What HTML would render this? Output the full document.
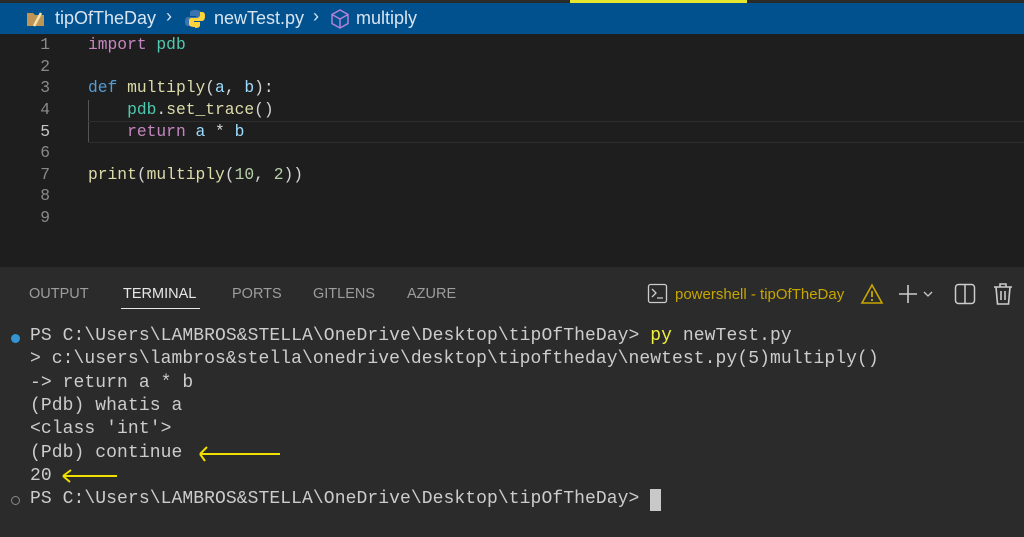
<!DOCTYPE html>
<html><head><meta charset="utf-8"><style>
*{margin:0;padding:0;box-sizing:border-box}
body{width:1024px;height:537px;overflow:hidden;background:#2b2b2b;position:relative;font-family:"Liberation Sans",sans-serif}
.top{position:absolute;left:0;top:0;width:1024px;height:3px;background:#2b2b2b}
.top i{position:absolute;left:570px;top:0;width:177px;height:3px;background:#e6e62e}
.bc{position:absolute;left:0;top:3px;width:1024px;height:31px;background:#02518f;color:#d8e4f0;font-size:18px}
.bc span{position:absolute;top:5px}
.ed{position:absolute;left:0;top:34px;width:1024px;height:233px;background:#1e1e1e}
.ln{position:absolute;left:0;width:50px;text-align:right;color:#8a8a8a;font:16.3px "Liberation Mono",monospace}
.cd{position:absolute;left:88px;white-space:pre;color:#d4d4d4;font:16.3px "Liberation Mono",monospace}
.k{color:#c586c0}.m{color:#4ec9b0}.d{color:#569cd6}.f{color:#dcdcaa}.v{color:#9cdcfe}.n{color:#b5cea8}
.tabs span{position:absolute;top:286px;font-size:14.5px;color:#9d9d9d}
.term{position:absolute;left:30px;white-space:pre;color:#cccccc;font:18px "Liberation Mono",monospace;letter-spacing:0.08px}
</style></head><body>
<div class="top"><i></i></div>
<div class="bc">
<svg style="position:absolute;left:26px;top:7px" width="20" height="18"><path d="M1 3h6l2 2h9v11H1z" fill="#c09553"/><path d="M8 16l7-13" stroke="#f3e3b0" stroke-width="2.5"/></svg>
<span style="left:55px">tipOfTheDay</span>
<span style="left:166px;top:3px">›</span>
<svg style="position:absolute;left:185px;top:6px" width="20" height="20"><path d="M10 1c-5 0-5 2-5 3v3h6v1H3c-2 0-3 2-3 5s1 4 3 4h2v-3c0-2 2-3 4-3h5c1 0 2-1 2-3V4c0-2-2-3-6-3z" fill="#3a75b0"/><path d="M10 19c5 0 5-2 5-3v-3H9v-1h8c2 0 3-2 3-5s-1-4-3-4h-2v3c0 2-2 3-4 3H6c-1 0-2 1-2 3v3c0 2 2 3 6 3z" fill="#ffd43b"/></svg>
<span style="left:214px">newTest.py</span>
<span style="left:313px;top:3px">›</span>
<svg style="position:absolute;left:330px;top:6px" width="20" height="20"><path d="M10 1l8 4.5v9L10 19l-8-4.5v-9z M2 5.5l8 4.5 8-4.5 M10 10v9" fill="none" stroke="#b180d7" stroke-width="1.5"/></svg>
<span style="left:356px">multiply</span>
</div>
<div class="ed">
<div class="ln" style="top:1px">1</div><div class="ln" style="top:23px">2</div><div class="ln" style="top:44px">3</div><div class="ln" style="top:66px">4</div><div class="ln" style="top:88px;color:#c6c6c6">5</div><div class="ln" style="top:109px">6</div><div class="ln" style="top:131px">7</div><div class="ln" style="top:152px">8</div><div class="ln" style="top:174px">9</div>
<div style="position:absolute;left:88px;top:66px;width:1px;height:43px;background:#555"></div>
<div style="position:absolute;left:88px;top:87px;width:936px;height:22px;border-top:1px solid #2e2e2e;border-bottom:1px solid #2e2e2e"></div>
<div class="cd" style="top:1px"><span class="k">import</span> <span class="m">pdb</span></div>
<div class="cd" style="top:44px"><span class="d">def</span> <span class="f">multiply</span>(<span class="v">a</span>, <span class="v">b</span>):</div>
<div class="cd" style="top:66px">    <span class="m">pdb</span>.<span class="f">set_trace</span>()</div>
<div class="cd" style="top:88px">    <span class="k">return</span> <span class="v">a</span> * <span class="v">b</span></div>
<div class="cd" style="top:131px"><span class="f">print</span>(<span class="f">multiply</span>(<span class="n">10</span>, <span class="n">2</span>))</div>
</div>
<div class="tabs">
<span style="left:29px">OUTPUT</span>
<span style="left:123px;color:#e7e7e7">TERMINAL</span>
<span style="left:232px">PORTS</span>
<span style="left:313px">GITLENS</span>
<span style="left:407px">AZURE</span>
</div>
<div style="position:absolute;left:121px;top:308px;width:79px;height:1px;background:#e7e7e7"></div>
<svg style="position:absolute;left:647px;top:283px" width="22" height="22"><rect x="1.5" y="1.5" width="18" height="18" rx="2" fill="none" stroke="#ccc" stroke-width="1.3"/><path d="M5 6l4 4-4 4M10 15h6" fill="none" stroke="#ccc" stroke-width="1.3"/></svg>
<span style="position:absolute;left:675px;top:286px;font-size:15px;color:#c7a600">powershell - tipOfTheDay</span>
<svg style="position:absolute;left:860px;top:283px" width="24" height="22"><path d="M12 2L22 20H2z" fill="none" stroke="#c7a600" stroke-width="1.6"/><path d="M12 8v6M12 16v2" stroke="#c7a600" stroke-width="1.8"/></svg>
<svg style="position:absolute;left:897px;top:283px" width="44" height="22"><path d="M11 2v18M2 11h18" stroke="#ccc" stroke-width="1.6"/><path d="M27 9l4 4 4-4" fill="none" stroke="#ccc" stroke-width="1.3"/></svg>
<svg style="position:absolute;left:954px;top:283px" width="22" height="22"><rect x="1.5" y="1.5" width="19" height="19" rx="3" fill="none" stroke="#ccc" stroke-width="1.5"/><path d="M11 2v18" stroke="#ccc" stroke-width="1.5"/></svg>
<svg style="position:absolute;left:992px;top:282px" width="22" height="24"><path d="M2 5h18M8 5V2h6v3M4 5l1.5 17h11L18 5M9 9v9M13 9v9" fill="none" stroke="#ccc" stroke-width="1.6"/></svg>
<div style="position:absolute;left:11px;top:334px;width:9px;height:9px;border-radius:50%;background:#3794d2"></div>
<div style="position:absolute;left:11px;top:496px;width:9px;height:9px;border-radius:50%;border:1.5px solid #888"></div>
<div class="term" style="top:326px">PS C:\Users\LAMBROS&amp;STELLA\OneDrive\Desktop\tipOfTheDay&gt; <span style="color:#f0f040">py</span> newTest.py</div>
<div class="term" style="top:349px">&gt; c:\users\lambros&amp;stella\onedrive\desktop\tipoftheday\newtest.py(5)multiply()</div>
<div class="term" style="top:373px">-&gt; return a * b</div>
<div class="term" style="top:396px">(Pdb) whatis a</div>
<div class="term" style="top:419px">&lt;class 'int'&gt;</div>
<div class="term" style="top:443px">(Pdb) continue</div>
<div class="term" style="top:466px">20</div>
<div class="term" style="top:489px">PS C:\Users\LAMBROS&amp;STELLA\OneDrive\Desktop\tipOfTheDay&gt; </div>
<div style="position:absolute;left:650px;top:489px;width:11px;height:22px;background:#c8c8c8"></div>
<svg style="position:absolute;left:188px;top:440px" width="100" height="30"><path d="M12 14H92M12 14l7-7M12 14l5 7" fill="none" stroke="#f0e000" stroke-width="2"/></svg>
<svg style="position:absolute;left:55px;top:462px" width="70" height="30"><path d="M8 14H62M8 14l8-6M8 14l7 6" fill="none" stroke="#f0e000" stroke-width="2"/></svg>
</body></html>
